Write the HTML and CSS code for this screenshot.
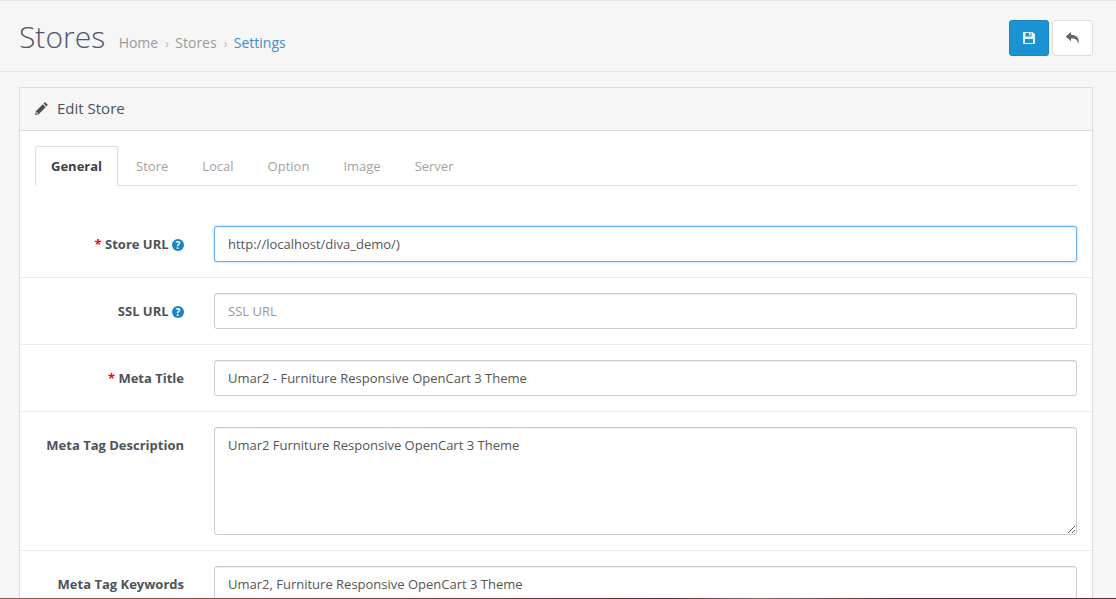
FILE: index.html
```html
<!DOCTYPE html>
<html lang="en">
<head>
    <meta charset="UTF-8">
    <meta name="viewport" content="width=device-width, initial-scale=1.0">
    <title>Stores</title>
    <link rel="stylesheet" href="styles.css">
</head>
<body>
    <div class="page">
        <div class="page-header">
            <div class="title-wrap">
                <h1 class="title">Stores</h1>
                <ul class="breadcrumb">
                    <li><a href="#">Home</a></li>
                    <li class="sep">›</li>
                    <li><a href="#">Stores</a></li>
                    <li class="sep">›</li>
                    <li><a href="#" class="current">Settings</a></li>
                </ul>
            </div>
            <div class="actions">
                <button class="btn btn-save" title="Save">
                    <svg width="14" height="14" viewBox="0 0 14 14"><path fill="#e4f2fa" fill-rule="evenodd" d="M1.500 1h9.200L13 3.300V12c0 .6-.4 1-1 1H2c-.6 0-1-.4-1-1V1.500c0-.3.2-.5.5-.5zM3.500 2v3.600h6V2h-1v2.600h-1.500V2zM3 8v4h8V8z"/></svg>
                </button>
                <button class="btn btn-back" title="Cancel">
                    <svg width="15" height="14" viewBox="0 0 14 13"><path fill="#5d6770" d="M5.600 1L.6 5.200l5 4.300V7c3.400-.2 5.700.5 6.900 5 1.300-5.200-1.500-8.300-6.900-8.500z"/></svg>
                </button>
            </div>
        </div>

        <div class="panel">
            <div class="panel-heading">
                <svg width="15" height="15" viewBox="0 0 14 14"><path fill="#4a4f55" d="M10.300 1l2.700 2.700-1.400 1.400-2.700-2.700zM8.200 3.100l2.700 2.700-6.500 6.500-3.400.7.700-3.400zM2.400 10l-.4 2 2-.4z"/></svg>
                <span>Edit Store</span>
            </div>
            <div class="panel-body">
                <ul class="tabs">
                    <li class="tab active">General</li>
                    <li class="tab">Store</li>
                    <li class="tab">Local</li>
                    <li class="tab">Option</li>
                    <li class="tab">Image</li>
                    <li class="tab">Server</li>
                </ul>

                <div class="form-group first">
                    <label class="form-label"><span class="req">*</span> Store URL <span class="help">?</span></label>
                    <input class="form-control focus" type="text" value="http://localhost/diva_demo/)">
                </div>
                <div class="form-group">
                    <label class="form-label">SSL URL <span class="help">?</span></label>
                    <input class="form-control" type="text" placeholder="SSL URL">
                </div>
                <div class="form-group">
                    <label class="form-label"><span class="req">*</span> Meta Title</label>
                    <input class="form-control" type="text" value="Umar2 - Furniture Responsive OpenCart 3 Theme">
                </div>
                <div class="form-group">
                    <label class="form-label">Meta Tag Description</label>
                    <textarea class="form-control area">Umar2 Furniture Responsive OpenCart 3 Theme</textarea>
                </div>
                <div class="form-group">
                    <label class="form-label">Meta Tag Keywords</label>
                    <input class="form-control" type="text" value="Umar2, Furniture Responsive OpenCart 3 Theme">
                </div>
            </div>
        </div>
    </div>
    <div class="bottom-line"></div>
</body>
</html>
```

FILE: styles.css
```css
*{
    box-sizing: border-box;
}
html, body{
    height: 100%;
}
body{
    margin: 0;
    overflow: hidden;
    position: relative;
    background-color: #f6f6f6;
    color: #4d5359;
    font-family: "Open Sans", Arial, sans-serif;
    font-size: 13px;
}
.page{
    border-top: 1px solid #e6e6e6;
}
.page-header{
    height: 71px;
    padding: 0 23px 0 19px;
    display: flex;
    align-items: center;
    justify-content: space-between;
    border-bottom: 1px solid #e6e6e6;
}
.title-wrap{
    display: flex;
    align-items: baseline;
}
.title{
    margin: 0;
    font-size: 30px;
    font-weight: 300;
    color: #4f5468;
}
.breadcrumb{
    list-style: none;
    margin: 0 0 0 13.5px;
    padding: 0;
    display: flex;
    align-items: baseline;
    font-size: 14px;
}
.breadcrumb a{
    color: #9a9a9a;
    text-decoration: none;
}
.breadcrumb .current{
    color: #3f8fd0;
}
.sep{
    color: #b5b5b5;
    font-size: 12px;
    margin: 0 6.5px 0 7px;
}
.actions{
    display: flex;
    gap: 3px;
    margin-top: 4px;
}
.btn{
    width: 41px;
    height: 36px;
    padding: 0;
    border-radius: 3px;
    border: 1px solid #ddd;
    background: #fff;
    display: flex;
    align-items: center;
    justify-content: center;
    cursor: pointer;
}
.btn-save{
    width: 40px;
    background: #1b92d1;
    border-color: #1785c0;
}
.panel{
    margin: 15px 23px 0 19px;
    border: 1px solid #dcdcdc;
    background: #fff;
}
.panel-heading{
    height: 43px;
    padding: 0 15px 2px 14px;
    display: flex;
    align-items: center;
    gap: 8px;
    background: #f6f6f6;
    border-bottom: 1px solid #dcdcdc;
    font-size: 15px;
    color: #4d5359;
}
.panel-body{
    padding: 15px 15px 0;
}
.tabs{
    list-style: none;
    margin: 0 0 24px;
    padding: 0;
    display: flex;
    height: 40px;
    border-bottom: 1px solid #ddd;
}
.tab{
    height: 40px;
    padding: 0 17px;
    line-height: 41px;
    color: #a3a3a3;
}
.tab.active{
    height: 40px;
    padding: 0 15px;
    margin-right: 1px;
    line-height: 39px;
    border: 1px solid #ddd;
    border-bottom: 1px solid #fff;
    border-radius: 3px 3px 0 0;
    background: #fff;
    color: #3d4249;
    font-weight: 700;
}
.form-group{
    margin: 0 -15px;
    padding: 15px 15px 15px 0;
    display: flex;
    border-top: 1px solid #ededed;
}
.form-group.first{
    border-top: 0;
    padding-top: 16px;
}
.form-label{
    width: 194px;
    flex-shrink: 0;
    padding: 9px 30px 0 0;
    text-align: right;
    font-weight: 700;
    color: #4d5359;
}
.req{
    color: #f00;
}
.help{
    display: inline-block;
    width: 12px;
    height: 12px;
    border-radius: 50%;
    background: #1b82c4;
    color: #fff;
    font-size: 10px;
    line-height: 12px;
    text-align: center;
}
.form-control{
    display: block;
    width: 863px;
    height: 36px;
    padding: 8px 13px;
    border: 1px solid #ccc;
    border-radius: 3px;
    box-shadow: inset 0 1px 1px rgba(0,0,0,.075);
    font-family: inherit;
    font-size: 13px;
    color: #555;
    outline: none;
}
.form-control::placeholder{
    color: #999;
}
.focus{
    border-color: #66afe9;
    box-shadow: inset 0 1px 1px rgba(0,0,0,.075), 0 0 3px rgba(102,175,233,.6);
}
.area{
    height: 108px;
    resize: vertical;
}
.bottom-line{
    position: absolute;
    left: 0;
    right: 0;
    bottom: 0;
    height: 1px;
    background: linear-gradient(to right, #8f5a52, #6a3a40 45%, #5a2a3a 60%, #8a6a6a 68%, #5a2a3a 80%, #5a2a3a);
}
```
